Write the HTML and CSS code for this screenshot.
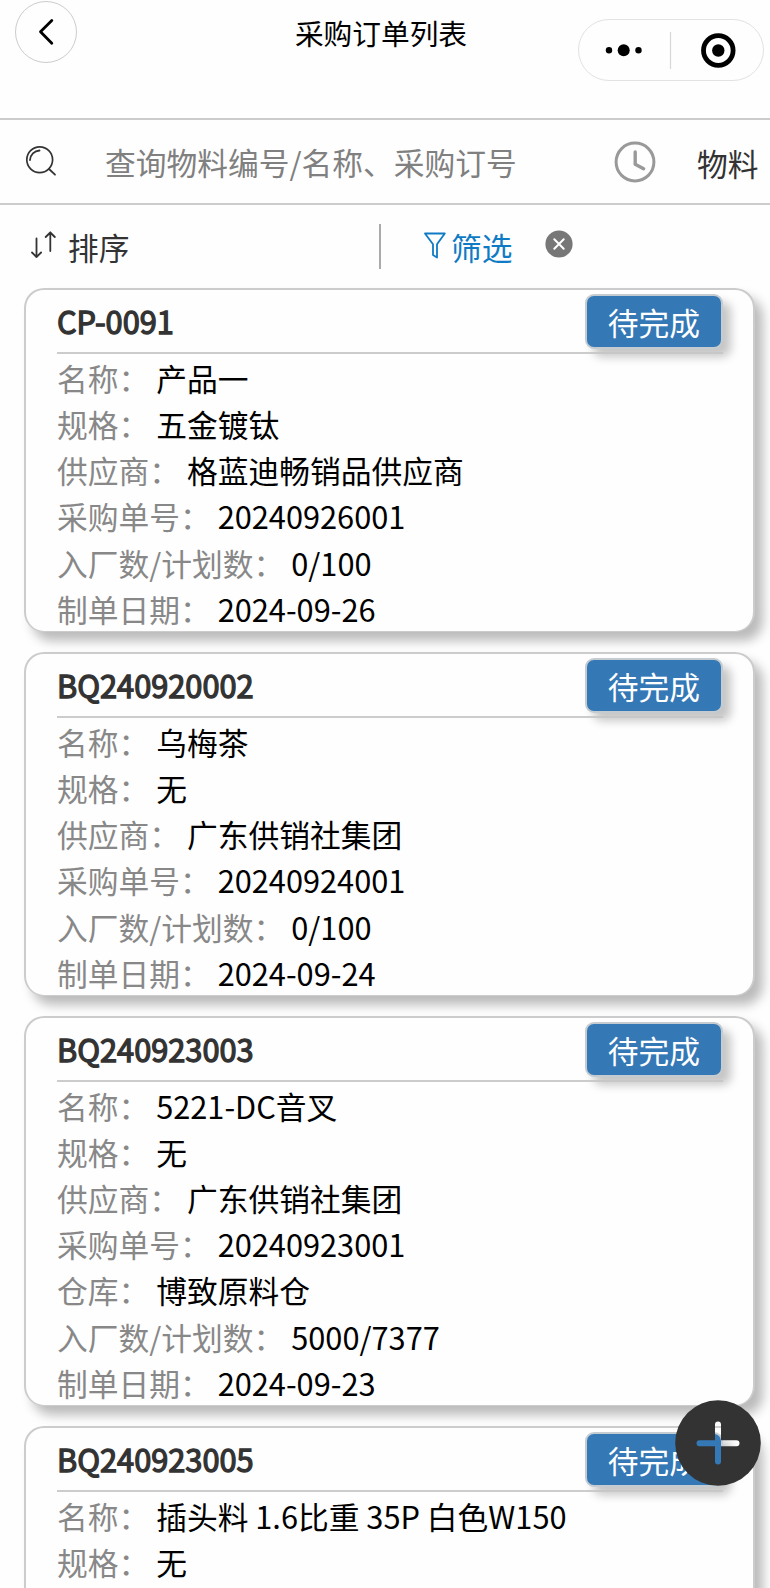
FILE: index.html
```
<!DOCTYPE html>
<html lang="zh-CN">
<head>
<meta charset="utf-8">
<title>采购订单列表</title>
<link rel="stylesheet" href="styles.css">
</head>
<body>
<div class="page">
  <header class="nav">
    <button class="back" aria-label="返回"><svg width="62" height="62" viewBox="0 0 62 62"><path d="M36.8 19.5 25.5 30.7 36.8 42.3" fill="none" stroke="#000" stroke-width="2.8" stroke-linecap="round" stroke-linejoin="round"/></svg></button>
    <h1 class="title">采购订单列表</h1>
    <div class="capsule">
      <svg width="184" height="60" viewBox="0 0 184 60"><circle cx="30" cy="30.3" r="3.2"/><circle cx="44.7" cy="30.3" r="6"/><circle cx="59.5" cy="30.3" r="3.2"/><path d="M91.5 12v37" stroke="#d8d8d8" stroke-width="1.2"/><circle cx="139.3" cy="30.5" r="14.8" fill="none" stroke="#000" stroke-width="4.8"/><circle cx="139.3" cy="30.5" r="6.2"/></svg>
    </div>
  </header>

  <section class="search">
    <svg class="search-icon" width="32" height="32" viewBox="0 0 32 32" fill="none" stroke="#333" stroke-linecap="round"><circle cx="14.7" cy="14.7" r="12.9" stroke-width="1.7"/><path d="M5 15a10 10 0 0 1 9.5-9.5M24 24l6 5.7" stroke-width="1.8"/></svg>
    <span class="placeholder">查询物料编号/名称、采购订号</span>
    <svg class="clock" width="42" height="42" viewBox="0 0 42 42" fill="none" stroke="#999" stroke-linecap="round" stroke-linejoin="round"><circle cx="21" cy="21" r="18.9" stroke-width="3"/><path d="M21.2 11v12.2l8.4 4.6" stroke-width="3.4"/></svg>
    <span class="material">物料</span>
  </section>

  <section class="tools">
    <div class="sort">
      <svg width="26" height="28" viewBox="0 0 26 28" fill="none" stroke="#333" stroke-width="1.8" stroke-linecap="round" stroke-linejoin="round"><path d="M5.5 7.5V26M1 21.5 5.5 26l4.6-4.5M19.3 20V1.5M14.7 6l4.6-4.5L23.8 6"/></svg>
      <span>排序</span>
    </div>
    <div class="filter">
      <svg width="22" height="27" viewBox="0 0 22 27" fill="none" stroke="#0f7bc4" stroke-width="1.8" stroke-linejoin="round"><path d="M1 1.5h19.8L13 12.3v13.2l-4-2.4V12.3Z"/></svg>
      <span>筛选</span>
      <svg class="clear" width="28" height="28" viewBox="0 0 28 28"><circle cx="14" cy="14" r="13.6" fill="#777"/><path d="m9.3 9.3 9.4 9.4m0-9.4-9.4 9.4" stroke="#fff" stroke-width="2" stroke-linecap="round"/></svg>
    </div>
  </section>

  <main class="list">
    <article class="card">
      <div class="card-head"><h2>CP-0091</h2><span class="badge">待完成</span></div>
      <p><span>名称： </span>产品一</p>
      <p><span>规格： </span>五金镀钛</p>
      <p><span>供应商： </span>格蓝迪畅销品供应商</p>
      <p><span>采购单号： </span>20240926001</p>
      <p><span>入厂数/计划数： </span>0/100</p>
      <p><span>制单日期： </span>2024-09-26</p>
    </article>
    <article class="card">
      <div class="card-head"><h2>BQ240920002</h2><span class="badge">待完成</span></div>
      <p><span>名称： </span>乌梅茶</p>
      <p><span>规格： </span>无</p>
      <p><span>供应商： </span>广东供销社集团</p>
      <p><span>采购单号： </span>20240924001</p>
      <p><span>入厂数/计划数： </span>0/100</p>
      <p><span>制单日期： </span>2024-09-24</p>
    </article>
    <article class="card">
      <div class="card-head"><h2>BQ240923003</h2><span class="badge">待完成</span></div>
      <p><span>名称： </span>5221-DC音叉</p>
      <p><span>规格： </span>无</p>
      <p><span>供应商： </span>广东供销社集团</p>
      <p><span>采购单号： </span>20240923001</p>
      <p><span>仓库： </span>博致原料仓</p>
      <p><span>入厂数/计划数： </span>5000/7377</p>
      <p><span>制单日期： </span>2024-09-23</p>
    </article>
    <article class="card">
      <div class="card-head"><h2>BQ240923005</h2><span class="badge">待完成</span></div>
      <p><span>名称： </span>插头料 1.6比重 35P 白色W150</p>
      <p><span>规格： </span>无</p>
      <p class="spare"></p>
    </article>
  </main>

  <button class="fab" aria-label="新增"><svg width="86" height="86" viewBox="0 0 86 86"><mask id="plus"><rect width="86" height="86" fill="#fff"/><path d="M43 24.5v37M24.5 43.3h37" stroke="#000" stroke-width="6" stroke-linecap="round"/></mask><circle cx="43" cy="43" r="42.8" fill="#333" mask="url(#plus)"/></svg></button>
</div>
</body>
</html>
```
FILE: styles.css
```
* { box-sizing: border-box; }
html, body { margin: 0; overflow: hidden; }
body {
  font-family: "Noto Sans CJK SC", sans-serif;
  font-size: 30.75px;
  color: #000;
  background: #fefefe;
}
h1, h2, p { margin: 0; font-weight: 400; }
button { padding: 0; border: 0; background: none; }
svg { display: block; flex: none; }

.page { position: relative; width: 770px; height: 1588px; overflow: hidden; }

.nav {
  display: grid;
  grid-template-columns: 192px 1fr 192px;
  align-items: start;
  height: 118px;
}
.back {
  width: 62px;
  height: 62px;
  margin: 1px 0 0 15px;
  border: 1px solid #ccc;
  border-radius: 50%;
}
.back svg { margin: -1px; }
.title { font-size: 28.7px; line-height: 42px; padding-top: 12px; padding-right: 8px; text-align: center; }
.capsule {
  width: 186px;
  height: 62px;
  margin-top: 19px;
  border: 1px solid #e2e2e2;
  border-radius: 31px;
}

.search {
  display: flex;
  align-items: center;
  height: 87px;
  border-top: 2px solid #ccc;
  border-bottom: 2px solid #ccc;
  padding-left: 25px;
  line-height: 46px;
}
.search-icon { margin-top: -1px; }
.placeholder { margin-left: 48px; width: 509px; color: #808080; white-space: nowrap; }
.clock { margin-right: 41px; }
.material { color: #333; white-space: nowrap; padding-top: 2px; }

.tools { display: flex; height: 83px; padding-top: 19px; color: #333; }
.sort, .filter { display: flex; height: 45px; line-height: 46px; }
.sort { width: 381px; padding-left: 31px; border-right: 2px solid #aaa; }
.sort svg { margin: 7px 11px 0 0; }
.filter { padding-left: 43px; color: #0f7bc4; }
.filter svg { margin: 8px 5px 0 0; }
.filter .clear { margin: 6px 0 0 32px; }

.list { display: flex; flex-direction: column; gap: 20.25px; padding: 0 15px 0 24px; }
.card {
  padding: 0 30px 0 31px;
  background: #fefefe;
  border: 2px solid #ccc;
  border-bottom-width: 1px;
  border-radius: 20px;
  box-shadow: 8px 9px 11px #bbb;
}
.card-head {
  display: flex;
  justify-content: space-between;
  height: 64px;
  margin-bottom: 1px;
  border-bottom: 2px solid #ccc;
}
.card-head h2 { font-size: 30.75px; line-height: 62px; color: #333; -webkit-text-stroke: 1.3px #333; }
.badge {
  width: 138px;
  height: 55px;
  margin-top: 4px;
  border: 2px solid #c4ccd2;
  border-radius: 9px;
  background: #3478b6;
  color: #fff;
  line-height: 52px;
  text-align: center;
  box-shadow: 8px 8px 10px #c6c6c6;
}
.card p { height: 46.15px; line-height: 46.15px; white-space: pre; }
.card p:last-child { height: 45px; }
.card p span { color: #888; }
.card .spare { height: 60px; }

.fab { position: absolute; left: 675px; top: 1400px; }
```
